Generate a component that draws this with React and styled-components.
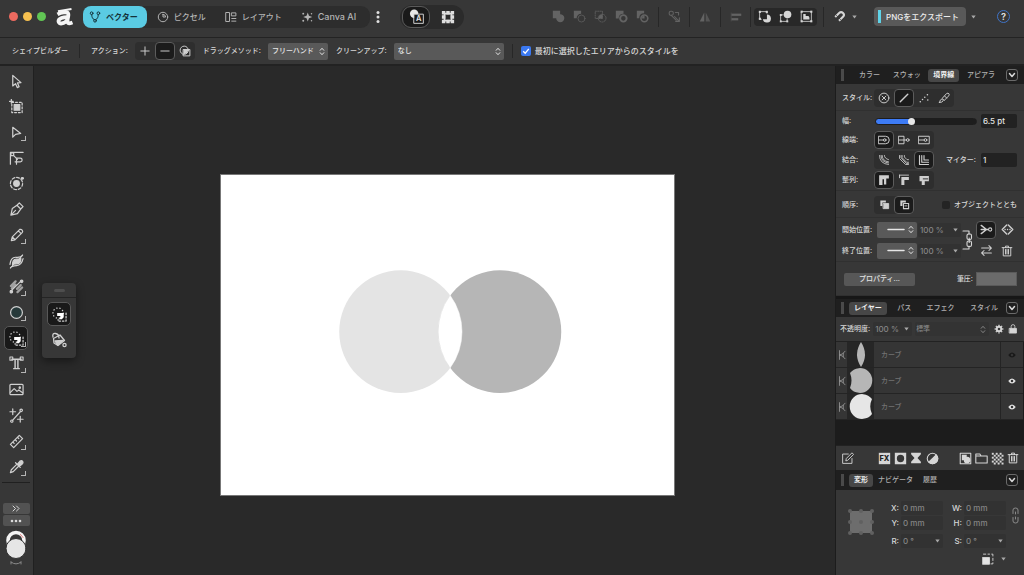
import React, { useState } from 'react'
import styled, { createGlobalStyle, css } from 'styled-components'

const Global = createGlobalStyle`
  * { box-sizing: border-box; }
  body {
    margin: 0;
    background: #292929;
    color: #d8d8d8;
    font-family: Inter, "Noto Sans CJK JP", sans-serif;
    font-size: 7px;
    font-weight: 500;
    line-height: 12px;
  }
  button, input, select {
    font: inherit;
    color: inherit;
    border: 0;
    margin: 0;
    padding: 0;
    background: none;
  }
  svg { display: block; flex: none; }
`

const Window = styled.div`
  display: flex;
  flex-direction: column;
  height: 100vh;
  min-height: 560px;
  overflow: hidden;
`

const TitleBar = styled.header`
  display: flex;
  align-items: center;
  height: 38px;
  padding: 0 14px 4px 9px;
  background: #373737;
  border-bottom: 1px solid #232323;
`

const Lights = styled.div`
  display: flex;
  gap: 5px;
  margin-right: 10px;
`

const Light = styled.span`
  width: 9px;
  height: 9px;
  border-radius: 50%;
  background: ${(p) => p.$color};
`

const Personas = styled.nav`
  display: flex;
  gap: 4px;
  margin-left: 10px;
  padding-right: 5px;
  border-radius: 9px;
  background: #2d2d2d;
`

const Persona = styled.button`
  display: flex;
  align-items: center;
  gap: 5px;
  height: 22px;
  padding: 0 9px 0 6px;
  border-radius: 8px;
  font-size: 8px;
  white-space: nowrap;
  color: #b4b4b4;
  ${(p) => p.$active && css`
    background: #5acbe3;
    color: #14323a;
    font-weight: 700;
  `}
`

const Latin = styled.span`
  font-size: 9px;
`

const More = styled.button`
  width: 16px;
  height: 18px;
  display: flex;
  align-items: center;
  justify-content: center;
`

const ViewModes = styled.div`
  display: flex;
  gap: 4px;
  margin-left: 14px;
  padding: 1px 2px;
  border-radius: 12px;
  background: #2b2b2b;
`

const ViewMode = styled.button`
  display: flex;
  align-items: center;
  justify-content: center;
  width: 28px;
  height: 22px;
  border: 1px solid ${(p) => (p.$active ? '#5a5a5a' : 'transparent')};
  border-radius: 9px;
  background: ${(p) => (p.$active ? '#1a1a1a' : 'none')};
`

const Spacer = styled.div`
  flex: 1;
`

const IconStrip = styled.div`
  display: flex;
  align-items: center;
  height: 18px;
  border-radius: 4px;
  background: ${(p) => (p.$dark ? '#282828' : 'none')};
`

const IconButton = styled.button`
  display: flex;
  align-items: center;
  justify-content: center;
  width: ${(p) => p.$width || 21}px;
  height: 18px;
  color: ${(p) => (p.$off ? '#636363' : '#d6d6d6')};
`

const Divider = styled.span`
  width: 1px;
  height: ${(p) => p.$height || 20}px;
  margin: 0 ${(p) => p.$gap || 4}px;
  background: #272727;
`

const ExportButton = styled.button`
  display: flex;
  align-items: center;
  gap: 5px;
  height: 19px;
  margin-left: 14px;
  padding: 0 7px 0 4px;
  border-radius: 4px;
  background: #595959;
  color: #ececec;
  font-size: 8px;
  white-space: nowrap;
  &::before {
    content: '';
    width: 3px;
    height: 13px;
    background: #5fd3e8;
  }
`

const Help = styled.button`
  width: 13px;
  height: 13px;
  margin-left: 17px;
  border: 1px solid #3f74c9;
  border-radius: 50%;
  color: #dcdcdc;
  font-size: 9px;
  font-weight: 700;
  line-height: 11px;
`

const ContextBar = styled.div`
  display: flex;
  align-items: center;
  height: 28px;
  padding: 0 12px;
  background: #373737;
  border-bottom: 2px solid #222;
  white-space: nowrap;
`

const Option = styled.div`
  display: flex;
  align-items: center;
  gap: 7px;
  margin-right: 8px;
  &:last-of-type {
    margin-right: 0;
  }
`

const Segments = styled.div`
  display: flex;
  border-radius: 4px;
  background: #2e2e2e;
`

const Segment = styled.button`
  display: flex;
  align-items: center;
  justify-content: center;
  width: 20px;
  height: 18px;
  border: 1px solid ${(p) => (p.$active ? '#5c5c5c' : 'transparent')};
  border-radius: 4px;
  background: ${(p) => (p.$active ? '#1b1b1b' : 'none')};
  color: #cfcfcf;
`

const SelectBox = styled.span`
  position: relative;
  display: flex;
  align-items: center;
  width: ${(p) => p.$width}px;
  height: ${(p) => p.$height || 17}px;
  border-radius: 2px;
  background: ${(p) => (p.$flat ? '#333' : '#595959')};
  color: ${(p) => (p.$flat ? '#858585' : '#e6e6e6')};
  select {
    appearance: none;
    width: 100%;
    height: 100%;
    padding: 0 12px 0 ${(p) => (p.$flat ? 1 : 4)}px;
    outline: none;
  }
  svg {
    position: absolute;
    right: 3px;
    pointer-events: none;
  }
  svg + svg {
    right: 12px;
  }
`

const CheckLabel = styled.label`
  display: flex;
  align-items: center;
  gap: 4px;
  overflow: hidden;
  white-space: nowrap;
  font-size: ${(p) => p.$size || 7}px;
`

const Check = styled.input`
  appearance: none;
  flex: none;
  width: ${(p) => p.$box || 8}px;
  height: ${(p) => p.$box || 8}px;
  border-radius: 2px;
  background: #242424;
  &:checked {
    background: #3a78f0 url("data:image/svg+xml,%3Csvg xmlns='http://www.w3.org/2000/svg' viewBox='0 0 10 10'%3E%3Cpath d='M2.2 5.2l2 2 3.6-4.4' fill='none' stroke='white' stroke-width='1.3'/%3E%3C/svg%3E");
  }
`

const Workspace = styled.div`
  display: grid;
  grid-template-columns: 34px 1fr 189px;
  flex: 1;
  min-height: 0;
`

const ToolColumn = styled.aside`
  display: flex;
  flex-direction: column;
  align-items: center;
  padding: 3px 1px 0 0;
  background: #373737;
  border-right: 1px solid #202020;
`

const ToolList = styled.div`
  display: flex;
  flex: 1;
  flex-direction: column;
  justify-content: space-between;
`

const Tool = styled.button`
  position: relative;
  display: flex;
  align-items: center;
  justify-content: center;
  width: 24px;
  height: 24px;
  border: 1px solid ${(p) => (p.$active ? '#585858' : 'transparent')};
  border-radius: 5px;
  background: ${(p) => (p.$active ? '#191919' : 'none')};
  color: #d0d0d0;
  ${(p) => p.$more && css`
    &::after {
      content: '';
      position: absolute;
      right: 1px;
      bottom: 2px;
      width: 4px;
      height: 4px;
      border-right: 1px solid #b5b5b5;
      border-bottom: 1px solid #b5b5b5;
    }
  `}
`

const ToolFooter = styled.div`
  display: flex;
  flex-direction: column;
  align-items: center;
  gap: 1px;
  width: 28px;
  margin-top: 3px;
  padding: 20px 0 8px;
  border-top: 1px solid #202020;
`

const SmallBar = styled.button`
  display: flex;
  align-items: center;
  justify-content: center;
  width: 27px;
  height: 11px;
  border-radius: 2px;
  background: #525252;
`

const Canvas = styled.main`
  position: relative;
  display: flex;
  align-items: center;
  justify-content: center;
  padding: 29px 0 0 26px;
  background: #292929;
`

const Artboard = styled.svg`
  width: 58%;
  height: auto;
  min-width: 453px;
  background: #fff;
  outline: 1px solid #777;
`

const Palette = styled.div`
  position: absolute;
  left: 8px;
  top: 217px;
  display: flex;
  flex-direction: column;
  align-items: center;
  gap: 2px;
  width: 34px;
  padding-bottom: 6px;
  border-radius: 4px;
  background: #373737;
  box-shadow: 0 3px 9px rgba(0, 0, 0, 0.45);
`

const Grip = styled.div`
  display: flex;
  align-items: center;
  justify-content: center;
  width: 100%;
  height: 15px;
  margin-bottom: 2px;
  border-bottom: 1px solid #242424;
  &::before {
    content: '';
    width: 11px;
    height: 3px;
    border-radius: 2px;
    background: #4e4e4e;
  }
`

const Panels = styled.aside`
  display: flex;
  flex-direction: column;
  min-height: 0;
  border-left: 1px solid #1c1c1c;
  background: #373737;
`

const PanelHead = styled.div`
  display: flex;
  align-items: center;
  height: ${(p) => p.$height || 18}px;
  padding: 0 6px 0 5px;
  background: #1f1f1f;
  &::before {
    content: '';
    flex: none;
    width: 3px;
    height: 12px;
    background: #4a4a4a;
  }
`

const Tabs = styled.div`
  display: flex;
  flex: 1;
  justify-content: ${(p) => (p.$packed ? 'flex-start' : 'space-between')};
  padding: 0 ${(p) => p.$right || 3}px 0 ${(p) => p.$left || 5}px;
`

const Tab = styled.button`
  height: 13px;
  padding: 0 5px;
  border-radius: 3px;
  white-space: nowrap;
  color: ${(p) => (p.$active ? '#f0f0f0' : '#b0b0b0')};
  background: ${(p) => (p.$active ? '#474747' : 'none')};
  font-weight: ${(p) => (p.$active ? 700 : 500)};
`

const Fold = styled.button`
  display: flex;
  align-items: center;
  justify-content: center;
  width: 12px;
  height: 12px;
  border: 1px solid #6a6a6a;
  border-radius: 3px;
`

const Section = styled.section`
  padding: 1px 7px 0 6px;
  border-bottom: 1px solid #303030;
`

const Row = styled.div`
  display: flex;
  align-items: center;
  height: ${(p) => p.$height || 20}px;
`

const Label = styled.label`
  width: ${(p) => (p.$width ? p.$width + 'px' : 'auto')};
  white-space: nowrap;
`

const Field = styled.input`
  width: ${(p) => p.$width || 36}px;
  min-width: 0;
  height: 14px;
  padding: 0 2px;
  border-radius: 2px;
  background: ${(p) => (p.$dim ? '#323232' : '#222')};
  color: ${(p) => (p.$dim ? '#858585' : '#e4e4e4')};
  font-size: 8px;
  outline: none;
`

const Slider = styled.input`
  appearance: none;
  flex: 1;
  min-width: 0;
  height: 7px;
  margin: 0 4px 0 1px;
  border-radius: 4px;
  background: linear-gradient(to right, #3d7bf5 36%, #1d1d1d 36%);
  border: 1px solid #1d1d1d;
  &::-webkit-slider-thumb {
    appearance: none;
    width: 7px;
    height: 7px;
    border-radius: 50%;
    background: #e6e6e6;
  }
`

const Ends = styled.div`
  display: grid;
  grid-template-columns: 34px 40px 43px 1fr 20px 20px;
  grid-auto-rows: 21px;
  column-gap: 1px;
  align-items: center;
`

const Linked = styled.span`
  grid-row: 1 / span 2;
  grid-column: 4;
`

const FlatButton = styled.button`
  width: 71px;
  height: 13px;
  margin-left: 2px;
  border-radius: 2px;
  background: #575757;
  color: #e2e2e2;
`

const Pressure = styled.button`
  width: 41px;
  height: 14px;
  margin-left: 3px;
  border: 1px solid #5a5a5a;
  background: #6b6b6b;
`

const PanelGap = styled.div`
  height: 3px;
  background: #171717;
`

const LayerBar = styled.div`
  display: flex;
  align-items: center;
  height: 25px;
  padding: 0 6px 0 4px;
  gap: 3px;
  border-bottom: 1px solid #222;
`

const LayerList = styled.ul`
  flex: 1;
  margin: 0;
  padding: 0;
  list-style: none;
  background: #1c1c1c;
`

const Layer = styled.li`
  display: grid;
  grid-template-columns: 11px 27px 1fr 23px;
  height: 26px;
  margin-right: 1px;
  background: #353535;
  border-bottom: 1px solid #242424;
  color: #727272;
`

const Cell = styled.div`
  display: flex;
  align-items: center;
  justify-content: center;
  background: ${(p) => (p.$dark ? '#262626' : 'none')};
  border-left: ${(p) => (p.$line ? '1px solid #242424' : '0')};
`

const LayerName = styled.span`
  align-self: center;
  padding-left: 7px;
`

const LayerTools = styled.div`
  display: flex;
  align-items: center;
  justify-content: space-between;
  height: 25px;
  padding: 0 3px 0 4px;
  border-top: 1px solid #222;
`

const LayerStrips = styled.div`
  display: flex;
  gap: 17px;
`

const Transform = styled.section`
  display: grid;
  grid-template-columns: 26px 22px 42px 17px 42px 1fr;
  grid-template-rows: 15px 16px 20px 16px;
  align-items: center;
  justify-items: end;
  column-gap: 2px;
  height: 85px;
  padding: 10px 5px 0 13px;
  font-size: 8px;
`

const Anchor = styled.div`
  grid-row: 1 / span 3;
  grid-column: 1;
  margin-bottom: 7px;
`

const WithCaret = styled.span`
  position: relative;
  display: flex;
  align-items: center;
  svg { position: absolute; right: 3px; }
`

const ChainCell = styled.div`
  grid-row: 1 / span 2;
  grid-column: 6;
`

const Origin = styled.div`
  grid-row: 4;
  grid-column: 4 / span 2;
  display: flex;
  align-items: center;
  gap: 7px;
`

const Svg = ({ size = 16, w, h, box, children, ...rest }) => (
  <svg
    width={w || size}
    height={h || size}
    viewBox={box || '0 0 16 16'}
    fill="none"
    stroke="currentColor"
    strokeWidth="1.3"
    strokeLinecap="round"
    strokeLinejoin="round"
    aria-hidden="true"
    {...rest}
  >
    {children}
  </svg>
)

const Caret = () => (
  <Svg w={5} h={4} box="0 0 5 4" stroke="none" fill="#a8a8a8"><path d="M.3.6h4.4L2.5 3.5z" /></Svg>
)

const UpDown = () => (
  <Svg w={6} h={9} box="0 0 6 9" strokeWidth="1"><path d="M1.2 3.3L3 1.3l1.8 2M1.2 5.7L3 7.7l1.8-2" /></Svg>
)

const Chevron = () => (
  <Svg w={8} h={6} box="0 0 8 6" strokeWidth="1.5"><path d="M1.5 1.5L4 4.5l2.5-3" /></Svg>
)

const Logo = () => (
  <Svg w={17} h={18} box="0 0 17 18" stroke="#f4f4f4" strokeLinecap="butt">
    <path d="M2 3.2L15.500 1" strokeWidth="2" />
    <path d="M1.500 6.300c4-2.200 9-2.600 10.400-1.300 1.200 1.200.2 3.500-.2 5.700-.4 2.600-.3 4.600 1.500 4.600 1.200 0 2-.3 3.300-.8" strokeWidth="3.800" />
    <path d="M12 9.200C7.500 9 2.500 10.300 2.500 13.300c0 3.400 6 2.800 9-1.600" strokeWidth="3.800" />
  </Svg>
)

const solid = { fill: 'currentColor', stroke: 'none' }

const icons = {
  vector: <><circle cx="3.5" cy="3" r="1.8" /><circle cx="12.5" cy="3" r="1.8" /><circle cx="8" cy="13" r="1.8" /><path d="M3.7 5c0 3.5 1 5.2 3 6.5M12.3 5c0 3.5-1 5.2-3 6.5" /></>,
  pixel: <><circle cx="8" cy="8" r="6.3" /><path d="M8 4.5V8h3.5A3.5 3.5 0 008 4.5z" /></>,
  layout: <><rect x="1.5" y="2" width="4.5" height="12" /><path d="M9 2.5h5.500v4H9zM9 10h5.500M9 13.500h5.500" /></>,
  canva: <g {...solid}><path d="M9 2l1.600 4.400L15 8l-4.400 1.600L9 14l-1.600-4.400L3 8l4.400-1.600z" /><circle cx="3" cy="3.500" r="1.300" /><circle cx="3" cy="13" r="1.300" /><circle cx="14" cy="3.500" r="1" /><circle cx="14" cy="13" r="1" /></g>,
  add: <g {...solid}><path d="M1 1h9v4.100A5 5 0 115.200 10H1z" /></g>,
  subtract: <><path d="M1 1h9v3.500A5.500 5.500 0 004.500 10H1z" {...solid} /><circle cx="10.500" cy="10.500" r="4.300" strokeWidth=".9" /></>,
  intersect: <><rect x="1.500" y="1.500" width="9" height="9" strokeWidth="1" strokeDasharray="1.500 1.500" /><circle cx="10" cy="10" r="4.800" strokeWidth="1" strokeDasharray="1.500 1.500" /><path d="M5.500 10.500Q5.500 5.500 10.500 5.500v5z" {...solid} /></>,
  divide: <><path d="M1 1h9.500v3.500Q4.500 4.500 4.500 10.500H1z" {...solid} /><circle cx="10.300" cy="10.300" r="4" strokeWidth="2.400" /></>,
  xor: <><path d="M1 1h9v3Q4 4 4 10H1z" {...solid} /><circle cx="10.300" cy="10.300" r="4.200" strokeWidth="2" /><path d="M7.500 10.500V8q1-1 3-.5v3z" {...solid} /></>,
  insertA: <><path d="M4 11.500H2V2h9v2" strokeWidth="1" /><g {...solid}><rect x="1" y="1" width="2.600" height="2.600" /><rect x="9.500" y="1" width="2.600" height="2.600" /><rect x="1" y="9.500" width="2.600" height="2.600" /><path d="M11 5.500a5 5 0 11-5 6h5z" /></g></>,
  insertB: <><path d="M5 6H2v8h8v-3" strokeWidth="1" /><g {...solid}><circle cx="10.500" cy="5.500" r="4.700" /><rect x="1" y="5" width="2.400" height="2.400" /><rect x="1" y="12.800" width="2.400" height="2.400" /><rect x="9" y="12.800" width="2.400" height="2.400" /></g></>,
  insertC: <><rect x="2" y="2" width="12" height="12" strokeWidth="1" /><g {...solid}><rect x=".8" y=".8" width="2.600" height="2.600" /><rect x="12.600" y=".8" width="2.600" height="2.600" /><rect x=".8" y="12.600" width="2.600" height="2.600" /><rect x="12.600" y="12.600" width="2.600" height="2.600" /><path d="M4 5h3v2.500h3.500q1.500 1.500 1.200 4.300H4z" /></g></>,
  order: <><rect x="1.500" y="1.500" width="5" height="5" rx="2" /><path d="M9 3h4v3M4 6.500l6 6M8 8l5 5M14 9.500V14H9.500" /></>,
  flip: <g {...solid}><path d="M7 2v12H1z" /><path d="M9 2v12h6z" opacity=".7" /></g>,
  align: <g {...solid}><rect x="1" y="2" width="1" height="12" opacity=".6" /><rect x="2" y="3.500" width="13" height="3" /><rect x="2" y="9.500" width="9" height="3" /></g>,
  magnet: <><path d="M2.700 8.600L7.600 3.700a3.300 3.300 0 014.700 4.700L7.400 13.300" strokeWidth="2.600" strokeLinecap="butt" /><path d="M3.500 6l3 3M7.500 10l3 3" stroke="#373737" strokeWidth=".8" /></>,
  move: <path d="M4 1.500v11.300l3-2.500 1.800 4.200 2-.9-1.800-4.100 3.800-.3z" />,
  artboard: <><rect x="3" y="3.500" width="11" height="11" strokeDasharray="2 2" /><rect x="5.500" y="6" width="6" height="6" fill="currentColor" /><path d="M2.500.5v4M.5 2.500h4" /></>,
  node: <path d="M4 2.500v10.500l3-3 5.500-1z" />,
  corner: <><path d="M1.500 14V1.500H15" /><path d="M2 2h3v3H2zM5 5l4 4" /><path d="M8 14V7.500h4q2 0 2 2t-2 2H6.500" /></>,
  contour: <><circle cx="8" cy="8" r="6.500" strokeDasharray="3 2" /><circle cx="8" cy="8" r="3" fill="currentColor" /><path d="M14 2.500h.5" strokeWidth="3" /></>,
  pen: <path d="M2 14l1.500-7 5-3.500 4 4L9 12.500zM2 14l5-5M8.500 3.500L11 1l4 4-2.500 2.500" />,
  pencil: <path d="M2.500 13.500l1-4 8-8q1.500-.5 2.500.7t.3 2.400l-8 8zM10 3l3 3M3.500 9.500l3 3" />,
  brush: <><path d="M1 11Q2 3 7.500 3.500T14.500 1M1.500 15q1-2 6.500-2.500T15 5" /><path d="M4 12.500Q3 5.500 8 5.500t4.500-2Q13.500 10.500 8 10.500t-4 2z" fill="currentColor" /><path d="M1.500 14.500l13-13" strokeWidth="1" /></>,
  spray: <><path d="M2 13L13 2" /><path d="M2 7.500l5-5M9 14l5-5M3 10l4-4M8.500 10.500l4-4" strokeWidth="2.400" opacity=".7" /><circle cx="13.500" cy="2.500" r="1.300" fill="currentColor" /><circle cx="2.500" cy="13.500" r="1.300" fill="currentColor" /></>,
  ellipse: <circle cx="8" cy="8" r="6.300" fill="#26393a" />,
  builder: <><circle cx="6.500" cy="6.500" r="5.500" strokeWidth="1.400" strokeDasharray=".3 3.100" /><path d="M15 6.500V15H6.500v-1.500" strokeWidth="1.300" strokeDasharray="1.600 2" /><path d="M5.500 6.500H12.500V11l-2 2H7q2-1 2-3.500H5.500z" fill="#fff" stroke="none" /></>,
  text: <><path d="M3 3.500h10M6.500 4v9M9.500 4v9M5 13.500h6" strokeWidth="1.500" /><path d="M1 1h3v3.500H1zM12 1h3v3.500h-3z" strokeWidth="1.200" /></>,
  image: <><rect x="1" y="2.500" width="14" height="11" rx="1" /><path d="M1.500 11l4-4 3 3 2-1.500 4 3" /><circle cx="11.500" cy="6" r=".7" /></>,
  points: <><path d="M4 1v6M1 4h6M12 9v6M9 12h6M4 13l8-9" /><circle cx="3" cy="14" r="1.200" /><circle cx="13" cy="2.500" r="1.300" /></>,
  ruler: <path d="M1.500 11L11 1.500 14.500 5 5 14.500zM4 8.500l1.500 1.500M6.500 6L8 7.500M9 3.500L10.500 5" />,
  dropper: <><path d="M8 6L2.500 11.500 1.500 14.500l3-1L10 8" /><path d="M7 4l5 5M9 5.500l2.500-3q2-1.500 3 0t-.5 3L11 8z" fill="currentColor" /></>,
  bucket: <><path d="M2.500 6.500L9 3l4.500 5.500L7 13.500 3 11zM2 5q-1-4 2.500-3.500T8 6" /><path d="M4 9l8-.5-5.500 4.500z" fill="currentColor" /><circle cx="13.500" cy="13" r="1.600" /></>,
  plus: <path d="M8 2.500v11M2.500 8h11" />,
  minus: <path d="M2.500 8h11" />,
  shapes: <><circle cx="7" cy="7" r="5.500" /><path d="M6 6h8.500v8.500H6z" /><path d="M6 12.500V6h6.500Q12 11.500 6 12.500z" {...solid} /></>,
  none: <><circle cx="8" cy="8" r="6.500" /><path d="M5.500 5.500l5 5M10.500 5.500l-5 5" /></>,
  line: <path d="M3 13L13 3" strokeWidth="1.900" />,
  dots: <path d="M3 13h.1M6 10h.1M9 7h.1M12.500 3.500h.1M13 10.500h.1" strokeWidth="2" />,
  strokeBrush: <path d="M2 14q.5-4 3-4.500l2 2Q6 14 2 14zM6 8l5.500-6q2-1 3 .3T14.500 5L8.500 11zM9 5.500l2.500 2.500" />,
  capRound: <><path d="M1 3h9a5 5 0 010 10H1zM1 8h6" /><circle cx="9" cy="8" r="1.700" /></>,
  capButt: <><path d="M1 3h7v10H1zM1 8h10" /><circle cx="13" cy="8" r="1.800" /></>,
  capSquare: <><path d="M1 3h14v10H1zM1 8h7" /><circle cx="10" cy="8" r="1.800" /></>,
  joinRound: <path d="M2 2q0 11 12 12M5.500 2q0 7.500 8.500 8.500M8.500 2q0 4 5.500 5.500M4 2q0 9 10 10" strokeWidth="1.100" />,
  joinBevel: <path d="M2 2v4l8 8h4M5.500 2v3l6 6H14M8.500 2v2l3.500 3.500h2M4 2v3l7 7.500h3" strokeWidth="1.100" />,
  joinMiter: <path d="M2 2v12h12M5 2v9H14M8 2v6h6" strokeWidth="1.500" />,
  alignA: <path d="M1.500 1.500h13v4.500H11V14H8V7H6v7.500H1.500z" {...solid} />,
  alignB: <><path d="M4.500 4h10v4H8.500v6.500h-4z" {...solid} /><path d="M2 1.500h12M2 1.500V5" strokeWidth="1.200" /></>,
  alignC: <><path d="M2 2.500h12.500v7H9v5H5v-5H2z" {...solid} /><path d="M7 6.500h6" stroke="#2e2e2e" /></>,
  front: <><path d="M2 2h8v3H5v5H2z" {...solid} /><rect x="6.500" y="6.500" width="7.500" height="7.500" fill="currentColor" /></>,
  behind: <><path d="M2 2h8v3H5v5H2z" {...solid} /><rect x="6.500" y="6.500" width="7.500" height="7.500" strokeWidth="1.600" /><path d="M8.500 10h3" /></>,
  arrowIn: <><path d="M1.500 3L8 8l-6.500 5M1.500 8H10" strokeWidth="1.800" /><circle cx="12.500" cy="8" r="2" /></>,
  arrowOut: <path d="M7 2.500L1.500 8 7 13.500M9 2.500L14.500 8 9 13.500M5 8h.1M8 8h.1M11 8h.1" strokeWidth="1.700" />,
  swap: <path d="M2 5h12M11 2l3 3-3 3M14 11H2M5 8l-3 3 3 3" />,
  trash: <path d="M1.500 3.500h13M6 3.500v-2h4v2M3 3.500v11h10v-11M6 6v6M8 6v6M10 6v6" />,
  gear: <><circle cx="8" cy="8" r="3.600" strokeWidth="3" /><path d="M8 1v2M8 13v2M1 8h2M13 8h2M3 3l1.500 1.500M11.500 11.500L13 13M13 3l-1.500 1.500M4.500 11.500L3 13" strokeWidth="2.200" strokeLinecap="butt" /></>,
  lock: <><rect x="2.500" y="7" width="11" height="7.500" fill="currentColor" /><path d="M5 7V4a3 3 0 016 0v3" /></>,
  curve: <path d="M4 1v14M4 8q5 0 9-6M4 8q5 0 9 6M10 5v6" strokeWidth="1.400" />,
  eye: <path d="M.5 8Q4 3 8 3T15.500 8Q12 13 8 13T.5 8zM8 5.500a2.500 2.500 0 100 5 2.500 2.500 0 000-5z" {...solid} fillRule="evenodd" />,
  edit: <path d="M9 2.500H2v11.500h11.500V8M6 10.500l.5-2.500 7-7 2 2-7 7z" strokeWidth="1.100" />,
  mask: <path d="M1 1h14v14H1zM8 3.500a4.500 4.500 0 100 9 4.500 4.500 0 000-9z" {...solid} fillRule="evenodd" />,
  hourglass: <path d="M1.500 1h13v2L10 8l4.500 5v2h-13v-2L6 8 1.500 3z" {...solid} />,
  adjust: <><circle cx="8" cy="8" r="6.500" /><path d="M12.600 3.400A6.500 6.500 0 013.400 12.600z" fill="currentColor" /></>,
  newMask: <><rect x="1.500" y="1.500" width="13" height="13" /><path d="M3.500 3.500h6V6A4 4 0 116 10H3.500z" {...solid} /></>,
  folder: <path d="M1 13.500v-11h5l1.500 2.500H15v8.500zM1 5h6" />,
  checker: <g {...solid}>{[0, 1, 2, 3, 4, 5].map((y) => [0, 1, 2].map((x) => <rect key={x + '-' + y} x={1 + x * 4.8 + (y % 2) * 2.4} y={1 + y * 2.4} width="2.4" height="2.4" />))}</g>,
}

const Icon = ({ name, size = 13, ...rest }) => <Svg size={size} {...rest}>{icons[name]}</Svg>

const personas = [
  ['vector', 'ベクター'],
  ['pixel', 'ピクセル'],
  ['layout', 'レイアウト'],
  ['canva', 'Canva AI'],
]

// name, label, has a flyout
const tools = [
  ['move', '移動', false],
  ['artboard', 'アートボード', false],
  ['node', 'ノード', true],
  ['corner', 'コーナー', false],
  ['contour', '輪郭', false],
  ['pen', 'ペン', false],
  ['pencil', '鉛筆', true],
  ['brush', 'ブラシ', false],
  ['spray', 'スプレー', true],
  ['ellipse', '楕円', true],
  ['builder', 'シェイプビルダー', true],
  ['text', 'テキスト', true],
  ['image', '画像', false],
  ['points', 'ポイント', false],
  ['ruler', '定規', true],
  ['dropper', 'スポイト', true],
]

const layers = [
  { id: 1, shape: 'lens', visible: false },
  { id: 2, shape: 'right', visible: true },
  { id: 3, shape: 'left', visible: true },
]

const Thumb = ({ shape }) => (
  <Svg w={26} h={25} box="0 0 26 25" stroke="none">
    {shape === 'lens' && <path d="M13 0Q21 12.500 13 25Q5 12.500 13 0z" fill="#b6b6b6" />}
    {shape === 'right' && <path d="M2 5A12.400 12.400 0 112 20Q5 12.500 2 5z" fill="#b6b6b6" />}
    {shape === 'left' && <path d="M24 5A12.400 12.400 0 1024 20Q20.500 12.500 24 5z" fill="#e6e6e6" />}
  </Svg>
)

function Picker({ items, active, size, label }) {
  const [current, setCurrent] = useState(active)
  return (
    <Segments role="group" aria-label={label}>
      {items.map((name) => (
        <Segment key={name} $active={name === current} aria-label={name} onClick={() => setCurrent(name)}>
          <Icon name={name} size={size || 12} />
        </Segment>
      ))}
    </Segments>
  )
}

function Head({ tabs, active, left, right, packed, height }) {
  const [current, setCurrent] = useState(active)
  return (
    <PanelHead $height={height}>
      <Tabs $left={left} $right={right} $packed={packed}>
        {tabs.map((t) => (
          <Tab key={t} $active={t === current} onClick={() => setCurrent(t)}>{t}</Tab>
        ))}
      </Tabs>
      <Fold aria-label="パネル"><Chevron /></Fold>
    </PanelHead>
  )
}

function TopBar() {
  const [persona, setPersona] = useState('vector')
  return (
    <TitleBar>
      <Lights>
        <Light $color="#ed6a5f" />
        <Light $color="#f5bf4f" />
        <Light $color="#61c554" />
      </Lights>
      <Logo />
      <Personas>
        {personas.map(([icon, label]) => (
          <Persona key={icon} $active={icon === persona} onClick={() => setPersona(icon)}>
            <Icon name={icon} size={12} />
            {icon === 'canva' ? <Latin>{label}</Latin> : label}
          </Persona>
        ))}
      </Personas>
      <More aria-label="その他">
        <Svg w={4} h={14} box="0 0 4 14" stroke="none" fill="#e0e0e0"><circle cx="2" cy="2.500" r="1.500" /><circle cx="2" cy="7" r="1.500" /><circle cx="2" cy="11.500" r="1.500" /></Svg>
      </More>
      <ViewModes>
        <ViewMode $active aria-label="ベクター表示">
          <Svg size={15}>
            <circle cx="5.500" cy="5" r="4.500" fill="#e8e8e8" stroke="none" />
            <rect x="5.500" y="5.500" width="9.800" height="9.800" fill="#1a1a1a" strokeWidth="1" />
            <text x="10.400" y="13.300" fontSize="8" fontWeight="600" textAnchor="middle" fill="#e8e8e8" stroke="none">A</text>
          </Svg>
        </ViewMode>
        <ViewMode aria-label="グリッド表示">
          <Svg size={14} stroke="none" fill="#dedede">
            <path d="M1 1h4v4H1zM6 1h4v4H6zM11 1h4v4h-4zM1 6h4v4H1zM11 6h4v4h-4zM1 11h4v4H1zM6 11h4v4H6zM11 11h4v4h-4z" />
            <path d="M3 3h10v2H3zM3 11h10v2H3zM3 3h2v10H3zM11 3h2v10h-2z" />
          </Svg>
        </ViewMode>
      </ViewModes>
      <Spacer />
      <IconStrip>
        {['add', 'subtract', 'intersect', 'divide', 'xor'].map((n) => (
          <IconButton key={n} $off aria-label={n}><Icon name={n} /></IconButton>
        ))}
      </IconStrip>
      <Divider $gap={5} />
      <IconButton $off aria-label="順序"><Icon name="order" /></IconButton>
      <Divider />
      <IconButton $off $width={22} aria-label="反転"><Icon name="flip" size={12} /></IconButton>
      <Divider />
      <IconButton $off $width={22} aria-label="整列"><Icon name="align" size={12} /></IconButton>
      <Divider $gap={3} />
      <IconStrip $dark>
        {['insertA', 'insertB', 'insertC'].map((n) => (
          <IconButton key={n} aria-label={n}><Icon name={n} /></IconButton>
        ))}
      </IconStrip>
      <Divider $gap={6} />
      <IconButton $width={18} aria-label="スナップ"><Icon name="magnet" /></IconButton>
      <IconButton $width={12} aria-label="スナップ設定"><Caret /></IconButton>
      <ExportButton>PNGをエクスポート</ExportButton>
      <IconButton $width={14} aria-label="エクスポート設定"><Caret /></IconButton>
      <Help>?</Help>
    </TitleBar>
  )
}

function Options() {
  return (
    <ContextBar>
      <span>シェイプビルダー</span>
      <Divider $gap={11} $height={14} />
      <Option>
        <Label>アクション:</Label>
        <Picker label="アクション" items={['plus', 'minus', 'shapes']} active="minus" />
      </Option>
      <Option>
        <Label htmlFor="drag">ドラッグメソッド:</Label>
        <SelectBox $width={60}>
          <select id="drag"><option>フリーハンド</option></select>
          <UpDown />
        </SelectBox>
      </Option>
      <Option>
        <Label htmlFor="cleanup">クリーンアップ:</Label>
        <SelectBox $width={110}>
          <select id="cleanup"><option>なし</option></select>
          <UpDown />
        </SelectBox>
      </Option>
      <Divider $gap={8} $height={14} />
      <CheckLabel $size={8}>
        <Check type="checkbox" $box={10} defaultChecked />
        最初に選択したエリアからのスタイルを
      </CheckLabel>
    </ContextBar>
  )
}

function Toolbox() {
  const [tool, setTool] = useState('builder')
  return (
    <ToolColumn>
      <ToolList>
        {tools.map(([name, label, more]) => (
          <Tool key={name} $active={name === tool} $more={more} aria-label={label} onClick={() => setTool(name)}>
            <Icon name={name} size={15} />
          </Tool>
        ))}
      </ToolList>
      <ToolFooter>
        <SmallBar aria-label="展開"><Svg w={8} h={7} box="0 0 8 7" strokeWidth="1"><path d="M1 1l2.500 2.500L1 6M4.500 1L7 3.500 4.500 6" /></Svg></SmallBar>
        <SmallBar aria-label="その他のツール"><Svg w={12} h={4} box="0 0 12 4" stroke="none" fill="#dadada"><circle cx="2" cy="2" r="1.300" /><circle cx="6" cy="2" r="1.300" /><circle cx="10" cy="2" r="1.300" /></Svg></SmallBar>
        <Svg w={22} h={40} box="0 -3 22 40">
          <circle cx="11" cy="10.500" r="8" stroke="#f4f4f4" strokeWidth="3.600" />
          <path d="M15.500 4.500l2.500 3" stroke="#dd5a5a" strokeWidth=".8" />
          <circle cx="11" cy="18.500" r="10" fill="#e6e6e6" stroke="#333" strokeWidth="1" />
          <path d="M6 32q5 4 10 0M6 32v2M16 32v2" stroke="#8a8a8a" strokeWidth="1" />
        </Svg>
      </ToolFooter>
    </ToolColumn>
  )
}

function Drawing() {
  return (
    <Canvas>
      <Artboard viewBox="0 0 454 320">
        <circle cx="180" cy="157" r="61.5" fill="#e4e4e4" />
        <circle cx="279.5" cy="157" r="61.5" fill="#b6b6b6" />
        <path d="M229.750 120.800A61.500 61.500 0 01229.750 193.200A61.500 61.500 0 01229.750 120.800z" fill="#fff" stroke="#fff" strokeWidth=".5" />
      </Artboard>
      <Palette>
        <Grip />
        <Tool $active aria-label="シェイプビルダー"><Icon name="builder" size={15} /></Tool>
        <Tool aria-label="塗りつぶし"><Icon name="bucket" size={16} /></Tool>
      </Palette>
    </Canvas>
  )
}

function LineEnd({ id, label }) {
  return (
    <>
      <Label htmlFor={id}>{label}</Label>
      <SelectBox $width={40} $height={16}>
        <select id={id} aria-label={label}><option aria-label="なし" /></select>
        <UpDown />
        <Svg w={18} h={3} box="0 0 18 3" strokeWidth="1.500"><path d="M1 1.500h16" /></Svg>
      </SelectBox>
      <WithCaret>
        <Field $dim $width={43} defaultValue="100 %" aria-label={label + ' %'} />
        <Caret />
      </WithCaret>
    </>
  )
}

function StrokePanel() {
  return (
    <>
      <Head tabs={['カラー', 'スウォッ', '境界線', 'アピアラ']} active="境界線" left={10} right={6} />
      <Section>
        <Row $height={25}>
          <Label $width={32}>スタイル:</Label>
          <Picker label="スタイル" items={['none', 'line', 'dots', 'strokeBrush']} active="line" />
        </Row>
      </Section>
      <Section>
        <Row $height={18}>
          <Label htmlFor="width" $width={32}>幅:</Label>
          <Slider id="width" type="range" min="0" max="100" defaultValue="34" />
          <Field defaultValue="6.5 pt" aria-label="幅の値" />
        </Row>
        <Row>
          <Label $width={32}>線端:</Label>
          <Picker label="線端" items={['capRound', 'capButt', 'capSquare']} active="capRound" />
        </Row>
        <Row>
          <Label $width={32}>結合:</Label>
          <Picker label="結合" items={['joinRound', 'joinBevel', 'joinMiter']} active="joinMiter" />
          <Spacer />
          <Label htmlFor="miter" $width={35}>マイター:</Label>
          <Field id="miter" defaultValue="1" />
        </Row>
        <Row>
          <Label $width={32}>整列:</Label>
          <Picker label="整列" items={['alignA', 'alignB', 'alignC']} active="alignA" />
        </Row>
      </Section>
      <Section>
        <Row $height={25}>
          <Label $width={32}>順序:</Label>
          <Picker label="順序" items={['front', 'behind']} active="behind" size={11} />
          <Spacer />
          <CheckLabel>
            <Check type="checkbox" />
            オブジェクトととも
          </CheckLabel>
        </Row>
      </Section>
      <Section>
        <Ends>
          <LineEnd id="start" label="開始位置:" />
          <Linked>
            <Svg w={11} h={22} box="0 0 11 22" strokeWidth="1.100">
              <path d="M1 2h6v3M1 20h6v-3" />
              <rect x="5" y="5" width="4.500" height="5.500" rx="1.500" />
              <rect x="5" y="12" width="4.500" height="5.500" rx="1.500" />
              <path d="M7.200 9v4.500" />
            </Svg>
          </Linked>
          <Segment $active aria-label="矢印を内側"><Icon name="arrowIn" /></Segment>
          <Segment aria-label="矢印を外側"><Icon name="arrowOut" /></Segment>
          <LineEnd id="end" label="終了位置:" />
          <Segment aria-label="入れ替え"><Icon name="swap" /></Segment>
          <Segment aria-label="削除"><Icon name="trash" size={12} /></Segment>
        </Ends>
      </Section>
      <Section>
        <Row $height={32}>
          <FlatButton>プロパティ...</FlatButton>
          <Spacer />
          <Label htmlFor="pressure">筆圧:</Label>
          <Pressure id="pressure" />
        </Row>
      </Section>
    </>
  )
}

function LayersPanel() {
  return (
    <>
      <Head tabs={['レイヤー', 'パス', 'エフェク', 'スタイル']} active="レイヤー" />
      <LayerBar>
        <Label htmlFor="opacity">不透明度:</Label>
        <WithCaret>
          <Field id="opacity" $dim $width={39} defaultValue="100 %" />
          <Caret />
        </WithCaret>
        <SelectBox $flat $width={74} $height={14}>
          <select aria-label="描画モード"><option>標準</option></select>
          <UpDown />
        </SelectBox>
        <IconButton $width={13} aria-label="設定"><Icon name="gear" size={10} /></IconButton>
        <IconButton $width={10} aria-label="ロック"><Icon name="lock" size={10} /></IconButton>
      </LayerBar>
      <LayerList>
        {layers.map((l) => (
          <Layer key={l.id}>
            <Cell><Icon name="curve" size={10} stroke="#949494" /></Cell>
            <Cell $dark><Thumb shape={l.shape} /></Cell>
            <LayerName>カーブ</LayerName>
            <Cell $line><Icon name="eye" size={8} color={l.visible ? '#e2e2e2' : '#191919'} /></Cell>
          </Layer>
        ))}
      </LayerList>
      <LayerTools>
        <IconButton $width={14} aria-label="編集"><Icon name="edit" /></IconButton>
        <LayerStrips>
          <IconStrip>
            <IconButton $width={16} aria-label="エフェクト">
              <Svg size={13} stroke="none">
                <rect x="1" y="1" width="14" height="14" fill="#d6d6d6" />
                <text x="8" y="11.300" fontSize="9" fontWeight="800" textAnchor="middle" fill="#222">FX</text>
              </Svg>
            </IconButton>
            <IconButton $width={16} aria-label="マスク"><Icon name="mask" /></IconButton>
            <IconButton $width={16} aria-label="ライブフィルター"><Icon name="hourglass" size={12} /></IconButton>
            <IconButton $width={16} aria-label="調整"><Icon name="adjust" /></IconButton>
          </IconStrip>
          <IconStrip>
            <IconButton $width={16} aria-label="レイヤーを追加"><Icon name="newMask" /></IconButton>
            <IconButton $width={16} aria-label="グループ"><Icon name="folder" /></IconButton>
            <IconButton $width={16} aria-label="ピクセルレイヤー"><Icon name="checker" /></IconButton>
            <IconButton $width={16} aria-label="削除"><Icon name="trash" size={12} /></IconButton>
          </IconStrip>
        </LayerStrips>
      </LayerTools>
    </>
  )
}

function TransformPanel() {
  return (
    <>
      <Head tabs={['変形', 'ナビゲータ', '履歴']} active="変形" packed height={20} />
      <Transform>
        <Anchor>
          <Svg size={28} box="0 0 28 28" stroke="none" fill="#606060">
            <rect x="3" y="3" width="22" height="22" fill="#6d6d6d" />
            {[3, 14, 25].map((y) => [3, 14, 25].map((x) => <circle key={x + '-' + y} cx={x} cy={y} r="2" />))}
          </Svg>
        </Anchor>
        <Label htmlFor="x">X:</Label>
        <Field id="x" $dim $width={42} defaultValue="0 mm" />
        <Label htmlFor="w">W:</Label>
        <Field id="w" $dim $width={42} defaultValue="0 mm" />
        <ChainCell>
          <Svg w={7} h={17} box="0 0 7 17" strokeWidth="1" stroke="#8a8a8a"><path d="M1 6.500V3q0-2 2.500-2T6 3v3.500M1 10.500V14q0 2 2.500 2T6 14v-3.500M3.500 5v2M3.500 10v2" /></Svg>
        </ChainCell>
        <Label htmlFor="y">Y:</Label>
        <Field id="y" $dim $width={42} defaultValue="0 mm" />
        <Label htmlFor="h">H:</Label>
        <Field id="h" $dim $width={42} defaultValue="0 mm" />
        <Label htmlFor="r">R:</Label>
        <WithCaret><Field id="r" $dim $width={42} defaultValue="0 °" /><Caret /></WithCaret>
        <Label htmlFor="s">S:</Label>
        <WithCaret><Field id="s" $dim $width={42} defaultValue="0 °" /><Caret /></WithCaret>
        <Origin>
          <Svg size={12} strokeWidth="1.200"><path d="M5 1.500H2M8 1.500h2M13 1.500h1.500V4M14.500 7v3M14.500 13v1.500H12" /><rect x="1" y="6" width="9" height="9" fill="#e4e4e4" /></Svg>
          <Caret />
        </Origin>
      </Transform>
    </>
  )
}

export default function App() {
  return (
    <>
      <Global />
      <Window>
        <TopBar />
        <Options />
        <Workspace>
          <Toolbox />
          <Drawing />
          <Panels>
            <StrokePanel />
            <PanelGap />
            <LayersPanel />
            <TransformPanel />
          </Panels>
        </Workspace>
      </Window>
    </>
  )
}
